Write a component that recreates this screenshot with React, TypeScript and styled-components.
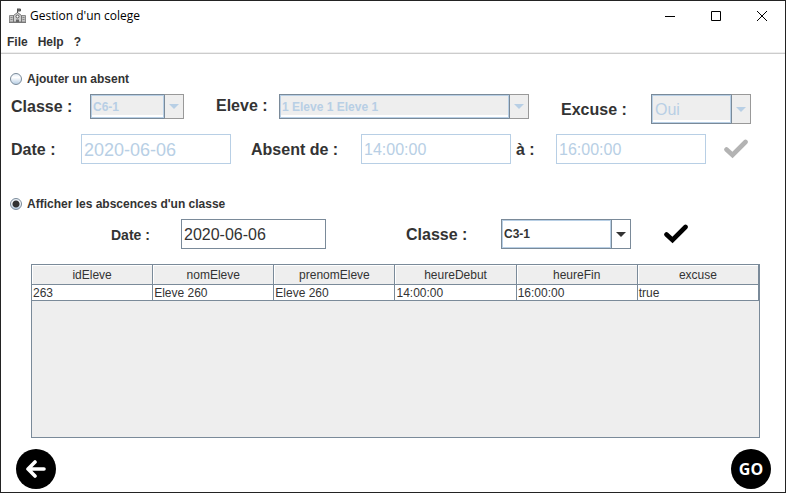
import React, { useId, useState } from "react";
import styled, { createGlobalStyle } from "styled-components";

const ink = "#333333";
const steel = "#7a8a99";
const sky = "#b8cfe5";
const panel = "#eeeeee";

const GlobalStyle = createGlobalStyle`
  * { box-sizing: border-box; }
  body {
    margin: 0;
    background: #fff;
    color: ${ink};
    font: 12px/18px "Liberation Sans", Arial, sans-serif;
  }
  button, input, select { font: inherit; color: inherit; margin: 0; }
`;

const Frame = styled.div`
  display: flex;
  flex-direction: column;
  min-height: 100vh;
  border: 1px solid #232323;
`;

const TitleBar = styled.header`
  display: flex;
  align-items: center;
  height: 30px;
  padding-left: 8px;
`;

const Title = styled.h1`
  flex: 1;
  margin: 0 0 0 4px;
  font: 400 12px/18px "Open Sans", "Noto Sans", sans-serif;
  color: #000;
`;

const CaptionButton = styled.button`
  display: grid;
  place-items: center;
  width: 46px;
  height: 30px;
  padding: 0;
  border: 0;
  background: none;
`;

const MenuBar = styled.nav`
  display: flex;
  gap: 10px;
  height: 23px;
  padding: 2px 6px 0;
  border-bottom: 1px solid #cccccc;
  box-shadow: inset 0 -1px 0 ${panel};
`;

const MenuButton = styled.button`
  height: 18px;
  padding: 0;
  border: 0;
  background: none;
  font-weight: 700;
`;

const Main = styled.main`
  flex: 1;
  display: flex;
  flex-direction: column;
  padding-top: 16px;
`;

const Section = styled.section<{ $gap: number }>`
  margin-bottom: ${(p) => p.$gap}px;
`;

const RadioLabel = styled.label`
  display: flex;
  width: fit-content;
  align-items: center;
  gap: 5px;
  height: 18px;
  margin: 0 0 6px 9px;
  font-weight: 700;
  line-height: 20px;
`;

const Radio = styled.input`
  appearance: none;
  width: 12px;
  height: 12px;
  border: 1px solid ${steel};
  border-radius: 50%;
  background: linear-gradient(#e4edf6, #ffffff 35%, ${sky});
  &:checked {
    background: radial-gradient(circle, ${ink} 0 3px, transparent 4px),
      linear-gradient(#e4edf6, #ffffff 35%, ${sky});
  }
`;

const Row = styled.div<{ $columns: string }>`
  display: grid;
  grid-template-columns: ${(p) => p.$columns};
  grid-template-rows: 30px;
  align-items: start;
  margin: 0 0 10px 10px;
  &:last-child { margin-bottom: 0; }
`;

const Label = styled.label<{ $indent?: number; $height?: number; $small?: boolean }>`
  padding-left: ${(p) => p.$indent ?? 0}px;
  font-size: ${(p) => (p.$small ? 14 : 16)}px;
  font-weight: 700;
  line-height: ${(p) => p.$height ?? 32}px;
  white-space: nowrap;
`;

const Field = styled.input<{ $large?: boolean }>`
  width: 100%;
  min-width: 0;
  height: 30px;
  padding: 2px 2px 0;
  border: 1px solid ${steel};
  background: #fff;
  font-size: ${(p) => (p.$large ? 18 : 16)}px;
  &:disabled { border-color: ${sky}; color: ${sky}; }
`;

const ComboBox = styled.div<{ $height: number }>`
  display: grid;
  grid-template: ${(p) => p.$height}px / minmax(0, 1fr) 20px;
`;

const ComboFace = styled.div<{ $off?: boolean }>`
  grid-area: 1 / 1;
  padding: 1px 0 3px;
  border: 1px solid ${steel};
  border-right: 0;
  background: ${(p) => (p.$off ? panel : "#fff")};
  background-clip: content-box;
  box-shadow: inset 0 0 0 1px ${sky};
`;

const ComboArrow = styled.div<{ $off?: boolean }>`
  grid-area: 1 / 2;
  display: grid;
  place-items: center;
  border: 1px solid ${(p) => (p.$off ? "#999999" : steel)};
  border-left-color: ${steel};
  background: ${(p) => (p.$off ? panel : "#fff")};
  color: ${(p) => (p.$off ? sky : ink)};
`;

const Select = styled.select<{ $large?: boolean }>`
  appearance: none;
  grid-area: 1 / 1 / 2 / 3;
  z-index: 1;
  width: 100%;
  padding: ${(p) => (p.$large ? "2px 20px 0 4px" : "0 20px 0 3px")};
  border: 0;
  background: none;
  font-size: ${(p) => (p.$large ? 16 : 12)}px;
  font-weight: ${(p) => (p.$large ? 400 : 700)};
  &:disabled { color: ${sky}; opacity: 1; }
`;

const CheckButton = styled.button<{ $indent: number }>`
  display: flex;
  align-items: center;
  justify-self: start;
  height: 30px;
  margin-left: ${(p) => p.$indent}px;
  padding: 0;
  border: 0;
  background: none;
  color: #000;
  &:disabled { color: #b3b3b3; }
`;

const TablePane = styled.div`
  flex: 1;
  margin: 0 25px 11px 30px;
  border: 1px solid ${steel};
  background: ${panel};
`;

const Table = styled.table`
  width: 100%;
  table-layout: fixed;
  border-collapse: separate;
  border-spacing: 0;
`;

const HeadCell = styled.th`
  height: 20px;
  padding: 2px 0 0;
  border: solid ${steel};
  border-width: 0 1px 1px 0;
  box-shadow: inset 1px 1px 0 #fff;
  font-weight: 400;
  line-height: 17px;
`;

const Cell = styled.td`
  height: 16px;
  padding: 1px 1px 0;
  border: solid ${steel};
  border-width: 0 1px 1px 0;
  background: #fff;
  line-height: 14px;
`;

const Footer = styled.footer`
  display: flex;
  justify-content: space-between;
  padding: 0 14px 3px 15px;
`;

const RoundButton = styled.button`
  display: grid;
  place-items: center;
  width: 40px;
  height: 40px;
  padding: 0;
  border: 0;
  border-radius: 50%;
  background: #000;
  color: #fff;
  font: 700 16px/20px "Open Sans", "Noto Sans", sans-serif;
`;

function SchoolIcon() {
  return (
    <svg width="17" height="16" viewBox="0 0 17 16" aria-hidden="true">
      <path d="M.5 7.500H5V14H.5zM12 7.500h4.500V14H12z" fill="#c4c4c4" stroke="#8a8a8a" />
      <path d="M4.500 14V7.500l4-3 4 3V14z" fill="#d0d0d0" stroke="#777" />
      <path d="M8.500 5V.5M9 1h2.500v2H9" fill="#777" stroke="#555" />
      <circle cx="8.500" cy="8.500" r="1.500" fill="#fff" stroke="#555" />
      <path d="M7 11.500h3V14H7z" fill="#666" />
      <path d="M1.500 9.500h2M1.500 11.500h2M13.500 9.500h2M13.500 11.500h2" stroke="#888" />
      <path d="M0 14.500h17" stroke="#777" />
    </svg>
  );
}

function CheckIcon() {
  return (
    <svg width="24" height="20" viewBox="0 0 24 20" aria-hidden="true">
      <path
        d="M2.500 10.500 8.500 16 21.500 3"
        fill="none"
        stroke="currentColor"
        strokeWidth="4.600"
        strokeLinecap="round"
      />
    </svg>
  );
}

type ComboProps = { id: string; options: string[]; height: number; large?: boolean; disabled?: boolean };

function Combo({ id, options, height, large, disabled }: ComboProps) {
  return (
    <ComboBox $height={height}>
      <ComboFace $off={disabled} />
      <ComboArrow $off={disabled}>
        <svg width="10" height="5" viewBox="0 0 10 5" aria-hidden="true">
          <path d="M0 0h10L5 5z" fill="currentColor" />
        </svg>
      </ComboArrow>
      <Select id={id} disabled={disabled} $large={large}>
        {options.map((o) => (
          <option key={o}>{o}</option>
        ))}
      </Select>
    </ComboBox>
  );
}

const columns = ["idEleve", "nomEleve", "prenomEleve", "heureDebut", "heureFin", "excuse"];
const rows = [["263", "Eleve 260", "Eleve 260", "14:00:00", "16:00:00", "true"]];

export default function App() {
  const id = useId();
  const [mode, setMode] = useState<"add" | "show">("show");
  const adding = mode === "add";

  return (
    <>
      <GlobalStyle />
      <Frame>
        <TitleBar>
          <SchoolIcon />
          <Title>Gestion d'un colege</Title>
          <CaptionButton aria-label="Minimize">
            <svg width="10" height="10"><path d="M0 5.500h10" stroke="#000" /></svg>
          </CaptionButton>
          <CaptionButton aria-label="Maximize">
            <svg width="10" height="10"><path d="M.5.5h9v9h-9z" fill="none" stroke="#000" /></svg>
          </CaptionButton>
          <CaptionButton aria-label="Close">
            <svg width="10" height="10"><path d="M0 0l10 10M10 0L0 10" stroke="#000" /></svg>
          </CaptionButton>
        </TitleBar>
        <MenuBar>
          <MenuButton>File</MenuButton>
          <MenuButton>Help</MenuButton>
          <MenuButton>?</MenuButton>
        </MenuBar>
        <Main>
          <Section $gap={31}>
            <RadioLabel>
              <Radio type="radio" name="mode" checked={adding} onChange={() => setMode("add")} />
              Ajouter un absent
            </RadioLabel>
            <Row $columns="79fr 94fr 95fr 250fr 122fr 100fr 34fr">
              <Label htmlFor={id + "c1"} $height={25}>Classe :</Label>
              <Combo id={id + "c1"} options={["C6-1"]} height={25} disabled={!adding} />
              <Label htmlFor={id + "el"} $height={24} $indent={32}>Eleve :</Label>
              <Combo id={id + "el"} options={["1 Eleve 1 Eleve 1"]} height={25} disabled={!adding} />
              <Label htmlFor={id + "ex"} $indent={32}>Excuse :</Label>
              <Combo id={id + "ex"} options={["Oui", "Non"]} height={30} large disabled={!adding} />
            </Row>
            <Row $columns="70fr 150fr 130fr 150fr 45fr 150fr 79fr">
              <Label htmlFor={id + "d1"}>Date :</Label>
              <Field id={id + "d1"} defaultValue="2020-06-06" $large disabled={!adding} />
              <Label htmlFor={id + "from"} $indent={20}>Absent de :</Label>
              <Field id={id + "from"} defaultValue="14:00:00" disabled={!adding} />
              <Label htmlFor={id + "to"} $indent={5}>à :</Label>
              <Field id={id + "to"} defaultValue="16:00:00" disabled={!adding} />
              <CheckButton $indent={18} aria-label="Ajouter" disabled={!adding}>
                <CheckIcon />
              </CheckButton>
            </Row>
          </Section>
          <Section $gap={15}>
            <RadioLabel>
              <Radio type="radio" name="mode" checked={!adding} onChange={() => setMode("show")} />
              Afficher les abscences d'un classe
            </RadioLabel>
            <Row $columns="170fr 145fr 175fr 130fr 154fr">
              <Label htmlFor={id + "d2"} $indent={100} $small>Date :</Label>
              <Field id={id + "d2"} defaultValue="2020-06-06" />
              <Label htmlFor={id + "c2"} $indent={80}>Classe :</Label>
              <Combo id={id + "c2"} options={["C3-1"]} height={30} />
              <CheckButton $indent={33} aria-label="Afficher">
                <CheckIcon />
              </CheckButton>
            </Row>
          </Section>
          <TablePane>
            <Table>
              <thead>
                <tr>{columns.map((c) => <HeadCell key={c} scope="col">{c}</HeadCell>)}</tr>
              </thead>
              <tbody>
                {rows.map((r) => (
                  <tr key={r[0]}>{r.map((v, i) => <Cell key={columns[i]}>{v}</Cell>)}</tr>
                ))}
              </tbody>
            </Table>
          </TablePane>
          <Footer>
            <RoundButton aria-label="Retour">
              <svg width="20" height="18" viewBox="0 0 20 18" aria-hidden="true">
                <path
                  d="M9 2 2 9l7 7M2.500 9H18"
                  fill="none"
                  stroke="#fff"
                  strokeWidth="3.600"
                  strokeLinecap="round"
                  strokeLinejoin="round"
                />
              </svg>
            </RoundButton>
            <RoundButton>GO</RoundButton>
          </Footer>
        </Main>
      </Frame>
    </>
  );
}
